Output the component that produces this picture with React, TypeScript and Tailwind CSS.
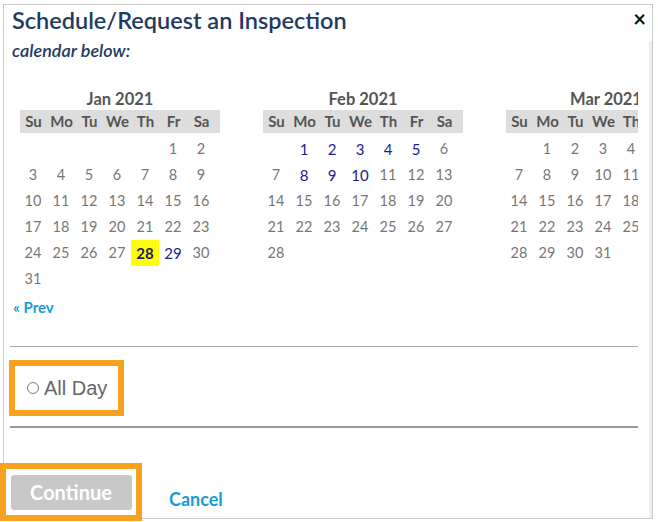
import React from "react";

type Month = {
  label: string;
  offset: number; // weekday index of day 1
  days: number;
  available: number[];
  selected?: number;
};

const months: Month[] = [
  { label: "Jan 2021", offset: 5, days: 31, available: [29], selected: 28 },
  { label: "Feb 2021", offset: 1, days: 28, available: [1, 2, 3, 4, 5, 8, 9, 10] },
  { label: "Mar 2021", offset: 1, days: 31, available: [] },
];

const weekdays = ["Su", "Mo", "Tu", "We", "Th", "Fr", "Sa"];

function MonthGrid({ month }: { month: Month }) {
  const cells: (number | null)[] = [];
  for (let i = 0; i < month.offset; i++) cells.push(null);
  for (let d = 1; d <= month.days; d++) cells.push(d);

  return (
    <div className="w-[200px] shrink-0">
      <div className="h-[24px] flex items-end justify-center text-[16.5px] font-bold text-[#555] leading-none pb-[3px]">
        {month.label}
      </div>
      <div className="h-[23px] bg-[#ddd] grid grid-cols-[repeat(7,28px)] items-center">
        {weekdays.map((w) => (
          <div key={w} className="text-center text-[15px] font-bold text-[#555] -ml-[1px]">
            {w}
          </div>
        ))}
      </div>
      <div className="mt-[3px] grid grid-cols-[repeat(7,28px)] -ml-[1px]">
        {cells.map((d, i) => {
          if (d === null) return <div key={i} className="h-[26px]" />;
          const isSel = d === month.selected;
          const isAvail = month.available.includes(d);
          return (
            <div
              key={i}
              className={
                isSel
                  ? "h-[26px] flex items-center justify-center text-[15px] font-bold text-[#1b1b7a] bg-[#ffff00]"
                  : isAvail
                  ? "h-[26px] flex items-center justify-center text-[15px] text-[#20208f]"
                  : "h-[26px] flex items-center justify-center text-[14.5px] text-[#777]"
              }
            >
              {d}
            </div>
          );
        })}
      </div>
    </div>
  );
}

export default function App() {
  return (
    <div className="w-[658px] h-[522px] bg-white relative overflow-hidden font-['Lato',sans-serif]">
      <div className="absolute left-[3px] top-[4px] w-[650px] h-[515px] border border-[#ccc] bg-white">
        <button className="absolute right-[6px] top-[3px] text-[22px] font-bold text-[#111] leading-none">
          ×
        </button>
        <div className="absolute right-0 top-[36px] bottom-0 w-[3px] bg-[#eee]" />

        <div className="pl-[6px] pr-[14px]">
          <h1 className="pl-[2px] pt-[1px] text-[23.5px] leading-[28px] font-semibold text-[#1f3a63]">
            Schedule/Request an Inspection
          </h1>
          <p className="pl-[2px] mt-[6px] text-[18px] leading-[20px] italic font-semibold text-[#1f3a63]">
            calendar below:
          </p>

          <div className="mt-[26px] pl-[10px] flex gap-[43px] overflow-hidden">
            {months.map((m) => (
              <MonthGrid key={m.label} month={m} />
            ))}
          </div>

          <a className="block mt-[5px] pl-[3px] text-[15px] font-bold text-[#1a9ad6] leading-[20px]">
            « Prev
          </a>

          <div className="mt-[29px] h-px bg-[#aaa]" />

          <div className="mt-[13px] -ml-[1px] w-[115px] h-[56px] border-[6px] border-[#f8a11c] flex items-center pl-[12px] gap-[5px] font-['Liberation_Sans',sans-serif]">
            <span className="w-[12px] h-[12px] rounded-full border border-[#777]" />
            <span className="text-[20px] text-[#666]">All Day</span>
          </div>

          <div className="mt-[10px] h-[2px] bg-[#999]" />

          <div className="mt-[48px] flex items-end">
            <div className="w-[121px] h-[35px]" />
            <a className="ml-[38px] -mb-[2px] text-[18px] font-bold text-[#1a9ad6]">Cancel</a>
          </div>
        </div>
      </div>

      <div className="absolute left-0 top-[463px] w-[142px] h-[58px] border-[6px] border-[#f8a11c] bg-white flex items-center justify-center">
        <button className="w-[121px] h-[35px] rounded-[3px] bg-[#c8c8c8] text-white text-[20px] font-bold font-['Lato',sans-serif]">
          Continue
        </button>
      </div>
    </div>
  );
}
